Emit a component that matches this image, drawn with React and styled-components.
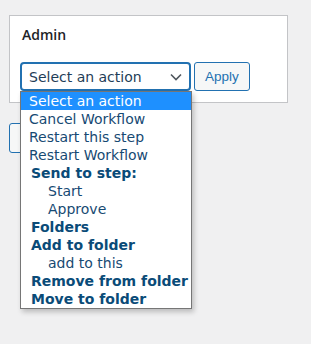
import React from "react";
import styled, { createGlobalStyle } from "styled-components";

const GlobalStyle = createGlobalStyle`
  html, body {
    margin: 0;
    padding: 0;
    background: #f0f0f1;
    font-family: "DejaVu Sans", Verdana, sans-serif;
  }
`;

const Page = styled.div`
  padding: 15px 0 0 9px;
  width: 311px;
  height: 344px;
  box-sizing: border-box;
  overflow: hidden;
`;

const Card = styled.div`
  width: 279px;
  height: 88px;
  box-sizing: border-box;
  background: #fff;
  border: 1px solid #c3c4c7;
  padding: 9px 0 0 10px;
`;

const Title = styled.div`
  font-family: "Open Sans", "Noto Sans", sans-serif;
  font-size: 14px;
  line-height: 20px;
  font-weight: 600;
  color: #1d2327;
  margin-left: 2px;
`;

const ActionRow = styled.div`
  display: flex;
  align-items: flex-start;
  gap: 3px;
  margin-top: 17px;
`;

const SelectWrap = styled.div`
  position: relative;
  width: 171px;
`;

const SelectBox = styled.div`
  height: 29px;
  box-sizing: border-box;
  border: 2px solid #2271b1;
  border-radius: 4px;
  background: #fff;
  display: flex;
  align-items: center;
  justify-content: space-between;
  padding: 0 7px 0 7px;
  font-size: 14px;
  color: #1f3d57;
`;

const Chevron = styled.svg`
  width: 12px;
  height: 8px;
  flex: none;
`;

const Dropdown = styled.ul`
  position: absolute;
  top: 29px;
  left: 0;
  width: 172px;
  box-sizing: border-box;
  margin: 0;
  padding: 0;
  list-style: none;
  background: #fff;
  border: 1px solid #767676;
  box-shadow: 2px 3px 5px rgba(0, 0, 0, 0.22);
  z-index: 2;
`;

const Option = styled.li`
  height: 18px;
  line-height: 19px;
  font-size: 14px;
  white-space: nowrap;
  overflow: hidden;
  padding-left: ${({ $indent, $group }) => ($indent ? 27 : $group ? 10 : 8)}px;
  font-weight: ${({ $group }) => ($group ? 700 : 400)};
  color: ${({ $active, $group }) => ($active ? "#fff" : $group ? "#0a4b78" : "#174a73")};
  background: ${({ $active }) => ($active ? "#1e90ff" : "transparent")};
`;

const Button = styled.button`
  height: 29px;
  box-sizing: border-box;
  padding: 0 10px;
  border: 1px solid #2271b1;
  border-radius: 3px;
  background: #f6f7f7;
  color: #2271b1;
  font-family: "Liberation Sans", Arial, sans-serif;
  font-size: 13.5px;
  cursor: pointer;
`;

const LowerButton = styled(Button)`
  display: block;
  margin-top: 20px;
  height: 30px;
  width: 70px;
`;

const options = [
  { label: "Select an action", active: true },
  { label: "Cancel Workflow" },
  { label: "Restart this step" },
  { label: "Restart Workflow" },
  { label: "Send to step:", group: true },
  { label: "Start", indent: true },
  { label: "Approve", indent: true },
  { label: "Folders", group: true },
  { label: "Add to folder", group: true },
  { label: "add to this", indent: true },
  { label: "Remove from folder", group: true },
  { label: "Move to folder", group: true },
];

export default function App() {
  return (
    <>
      <GlobalStyle />
      <Page>
        <Card>
          <Title>Admin</Title>
          <ActionRow>
            <SelectWrap>
              <SelectBox>
                <span>Select an action</span>
                <Chevron viewBox="0 0 12 8">
                  <path d="M1 1.5 L6 6.5 L11 1.5" fill="none" stroke="#50575e" strokeWidth="1.6" />
                </Chevron>
              </SelectBox>
              <Dropdown>
                {options.map((o) => (
                  <Option key={o.label} $active={o.active} $group={o.group} $indent={o.indent}>
                    {o.label}
                  </Option>
                ))}
              </Dropdown>
            </SelectWrap>
            <Button>Apply</Button>
          </ActionRow>
        </Card>
        <LowerButton aria-label="Save" />
      </Page>
    </>
  );
}
